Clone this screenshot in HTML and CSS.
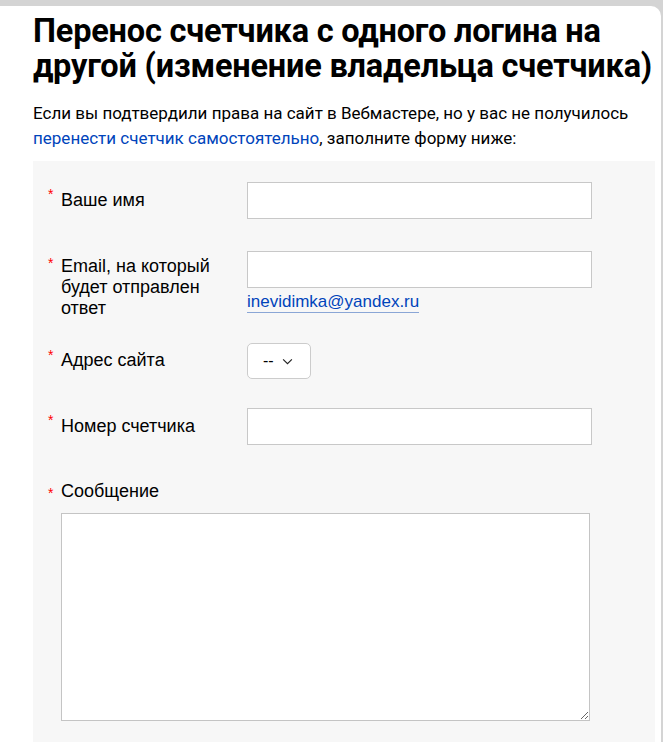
FILE: index.html
```html
<!DOCTYPE html>
<html lang="ru">
<head>
<meta charset="utf-8"/>
<title>Перенос счетчика</title>
<link rel="stylesheet" href="styles.css">
</head>
<body>
<div class="page">

  <h1 class="title">Перенос счетчика с одного логина на другой (изменение владельца счетчика)</h1>

  <p class="intro">Если вы подтвердили права на сайт в Вебмастере, но у вас не получилось <a href="#">перенести счетчик самостоятельно</a>, заполните форму ниже:</p>

  <!-- Форма ------------------------------------------------------------------>
  <form class="form">

    <div class="row row-name">
      <label class="label"><span class="req">*</span>Ваше имя</label>
      <div class="field"><input class="input" type="text"/></div>
    </div>

    <div class="row row-email">
      <label class="label"><span class="req">*</span>Email, на который будет отправлен ответ</label>
      <div class="field">
        <input class="input" type="text"/>
        <a class="email" href="#">inevidimka@yandex.ru</a>
      </div>
    </div>

    <div class="row row-site">
      <label class="label"><span class="req">*</span>Адрес сайта</label>
      <div class="field">
        <button class="select" type="button">--
          <svg class="chevron" viewBox="0 0 12 8"><path d="M1 1.5 6 6.5 11 1.5" fill="none" stroke="#222" stroke-width="1.3"/></svg>
        </button>
      </div>
    </div>

    <div class="row row-counter">
      <label class="label"><span class="req">*</span>Номер счетчика</label>
      <div class="field"><input class="input" type="text"/></div>
    </div>

    <div class="message">
      <label class="label"><span class="req">*</span>Сообщение</label>
      <textarea class="textarea"></textarea>
    </div>

  </form>

</div>
</body>
</html>
```

FILE: styles.css
```css
*{margin:0;padding:0;box-sizing:border-box}
body{
  background:#d4d4d4;
  padding-top:6px;
  font-family:"Liberation Sans",Arial,sans-serif;
  color:#000;
}
.page{
  background:#fff;
  margin-right:2px;
  border-top-right-radius:10px;
  min-height:736px;
  padding:8px 0 0 33px;
}
.title{
  font-family:Roboto,"Open Sans",sans-serif;
  font-weight:700;
  font-size:32.5px;
  line-height:35px;
  letter-spacing:-.2px;
  width:625px;
}
.intro{
  font-family:Roboto,sans-serif;
  font-size:17px;
  line-height:25px;
  margin-top:17px;
  width:610px;
}
.intro a{color:#04b;text-decoration:none}
.form{
  margin-top:10px;
  background:#f7f7f7;
  width:622px;
  min-height:600px;
  padding:21px 0 20px 15px;
}
.row{
  display:flex;
  align-items:flex-start;
}
.label{
  display:block;
  width:199px;
  padding-left:13px;
  position:relative;
  font-size:18px;
  line-height:21px;
  padding-top:8px;
}
.row-email .label{padding-top:5px;padding-right:20px}
.req{
  position:absolute;
  left:0;
  top:2px;
  color:#f00;
  font-size:14px;
}
.field{width:345px}
.input{
  display:block;
  width:345px;
  height:37px;
  border:1px solid #c8c8c8;
  background:#fff;
  font:inherit;
}
.row-name{margin-bottom:32px}
.row-email{margin-bottom:24px}
.row-site{margin-bottom:29px}
.row-site .label{padding-top:7px}
.row-counter{margin-bottom:36px}
.email{
  display:inline-block;
  margin-top:4px;
  font-size:17px;
  line-height:20px;
  color:#04b;
  text-decoration:none;
  border-bottom:1px solid #8aa6d6;
}
.select{
  display:flex;
  align-items:center;
  gap:8px;
  width:64px;
  height:36px;
  padding-left:15px;
  border:1px solid #ccc;
  border-radius:5px;
  background:#fff;
  font-family:"Liberation Sans",sans-serif;
  font-size:16px;
  color:#000;
}
.chevron{width:11px;height:7px}
.message .label{padding-top:0;width:auto}
.textarea{
  display:block;
  margin:11px 0 0 13px;
  width:529px;
  height:208px;
  border:1px solid #c4c4c4;
  background:#fff;
}
```
